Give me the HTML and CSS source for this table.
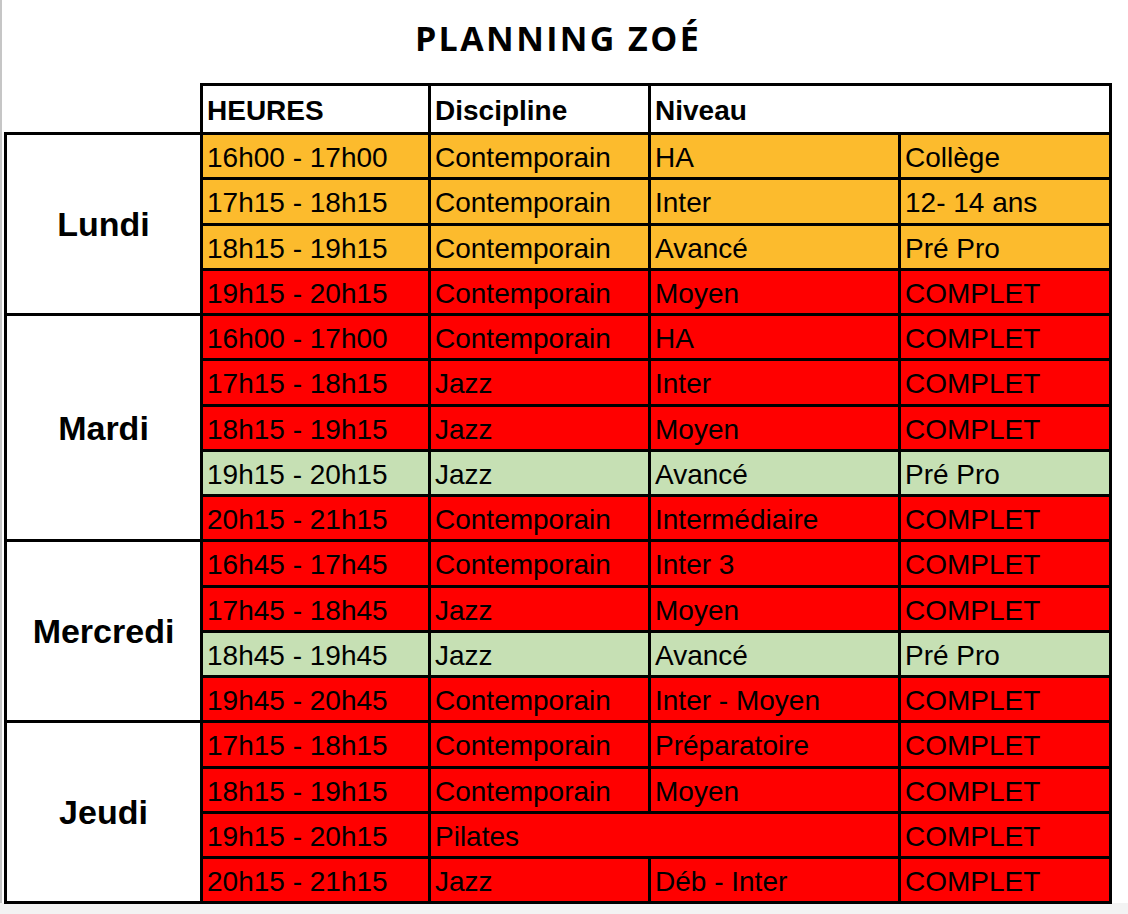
FILE: index.html
```html
<!DOCTYPE html>
<html lang="fr">
<head>
<meta charset="utf-8">
<title>Planning Zoé</title>
<link rel="stylesheet" href="styles.css">
</head>
<body>
<div class="page">
  <h1 class="title">PLANNING ZOÉ</h1>
  <table class="plan">
    <colgroup>
      <col class="c-day"><col class="c-time"><col class="c-disc"><col class="c-lvl"><col class="c-note">
    </colgroup>
    <thead>
      <tr class="head">
        <th class="corner"></th>
        <th>HEURES</th>
        <th>Discipline</th>
        <th colspan="2">Niveau</th>
      </tr>
    </thead>
    <tbody>
      <tr class="orange"><td class="day" rowspan="4">Lundi</td><td>16h00 - 17h00</td><td>Contemporain</td><td>HA</td><td>Collège</td></tr>
      <tr class="orange"><td>17h15 - 18h15</td><td>Contemporain</td><td>Inter</td><td>12- 14 ans</td></tr>
      <tr class="orange"><td>18h15 - 19h15</td><td>Contemporain</td><td>Avancé</td><td>Pré Pro</td></tr>
      <tr class="red"><td>19h15 - 20h15</td><td>Contemporain</td><td>Moyen</td><td>COMPLET</td></tr>

      <tr class="red"><td class="day" rowspan="5">Mardi</td><td>16h00 - 17h00</td><td>Contemporain</td><td>HA</td><td>COMPLET</td></tr>
      <tr class="red"><td>17h15 - 18h15</td><td>Jazz</td><td>Inter</td><td>COMPLET</td></tr>
      <tr class="red"><td>18h15 - 19h15</td><td>Jazz</td><td>Moyen</td><td>COMPLET</td></tr>
      <tr class="green"><td>19h15 - 20h15</td><td>Jazz</td><td>Avancé</td><td>Pré Pro</td></tr>
      <tr class="red"><td>20h15 - 21h15</td><td>Contemporain</td><td>Intermédiaire</td><td>COMPLET</td></tr>

      <tr class="red"><td class="day" rowspan="4">Mercredi</td><td>16h45 - 17h45</td><td>Contemporain</td><td>Inter 3</td><td>COMPLET</td></tr>
      <tr class="red"><td>17h45 - 18h45</td><td>Jazz</td><td>Moyen</td><td>COMPLET</td></tr>
      <tr class="green"><td>18h45 - 19h45</td><td>Jazz</td><td>Avancé</td><td>Pré Pro</td></tr>
      <tr class="red"><td>19h45 - 20h45</td><td>Contemporain</td><td>Inter - Moyen</td><td>COMPLET</td></tr>

      <tr class="red"><td class="day" rowspan="4">Jeudi</td><td>17h15 - 18h15</td><td>Contemporain</td><td>Préparatoire</td><td>COMPLET</td></tr>
      <tr class="red"><td>18h15 - 19h15</td><td>Contemporain</td><td>Moyen</td><td>COMPLET</td></tr>
      <tr class="red"><td>19h15 - 20h15</td><td colspan="2">Pilates</td><td>COMPLET</td></tr>
      <tr class="red"><td>20h15 - 21h15</td><td>Jazz</td><td>Déb - Inter</td><td>COMPLET</td></tr>
    </tbody>
  </table>
</div>
</body>
</html>
```
FILE: styles.css
```css
html, body {
  margin: 0;
  padding: 0;
}
body {
  background: #f3f3f3;
  width: 1128px;
  height: 914px;
  overflow: hidden;
}
.page {
  background: #ffffff;
  border-left: 2px solid #c6c6c6;
  padding-left: 2px;
  height: 903px;
  box-sizing: border-box;
}
.title {
  margin: 0;
  height: 83px;
  padding-top: 18px;
  box-sizing: border-box;
  text-align: center;
  width: 1108px;
  font-family: "Open Sans", "Liberation Sans", sans-serif;
  font-weight: 700;
  font-size: 34px;
  letter-spacing: 2.4px;
  line-height: 40px;
  color: #000;
}
.plan {
  border-collapse: collapse;
  table-layout: fixed;
  width: 1105px;
  font-family: "Liberation Sans", Arial, sans-serif;
  font-size: 28px;
  color: #000;
}
.c-day { width: 196px; }
.c-time { width: 228px; }
.c-disc { width: 220px; }
.c-lvl { width: 250px; }
.c-note { width: 211px; }
.plan th,
.plan td {
  border: 3px solid #000;
  padding: 4px 4px 0 4px;
  text-align: left;
  vertical-align: middle;
  white-space: nowrap;
  line-height: 1;
  overflow: hidden;
}
.plan tr { height: 45.25px; }
.plan tr.head { height: 49px; }
.plan th {
  font-weight: 700;
  background: #fff;
}
.plan th.corner {
  border: none;
  background: transparent;
}
.plan td.day {
  background: #fff;
  text-align: center;
  font-weight: 700;
  font-size: 34px;
  padding: 0;
}
.orange td { background: #fcbb2d; }
.red td { background: #ff0000; }
.green td { background: #c6e0b4; }
.plan tr td.day { background: #fff; }
```
